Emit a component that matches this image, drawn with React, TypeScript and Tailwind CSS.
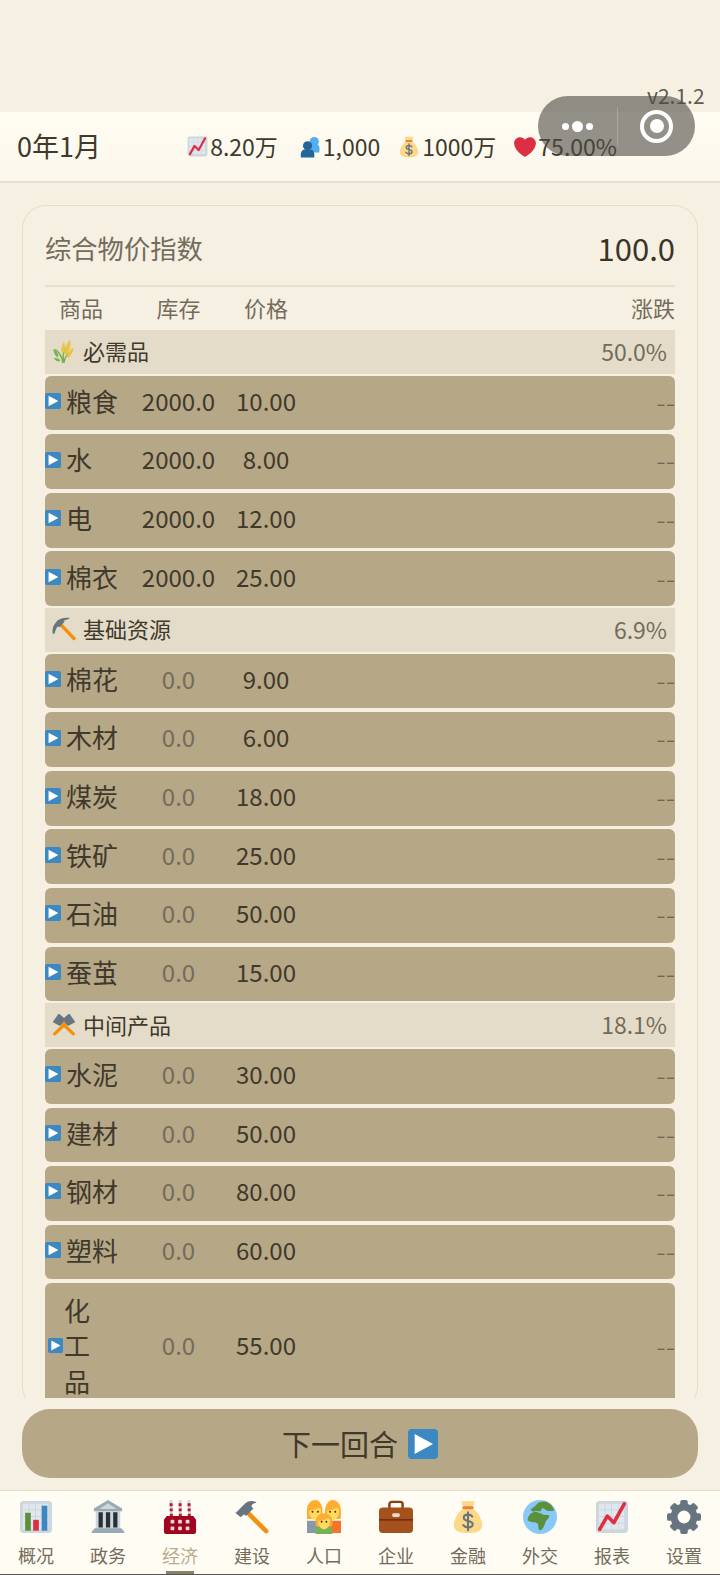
import React from "react";

type IP = { className?: string };
const S = ({ className, children }: IP & { children: React.ReactNode }) => (
  <svg viewBox="0 0 36 36" className={className}>{children}</svg>
);

const Play = ({ className }: IP) => (
  <S className={className}>
    <path fill="#3B88C3" d="M36 32c0 2.2-1.8 4-4 4H4c-2.2 0-4-1.800-4-4V4c0-2.2 1.800-4 4-4h28c2.200 0 4 1.800 4 4z" />
    <path fill="#FFF" d="M8 6l22 12L8 30z" />
  </S>
);
const Heart = ({ className }: IP) => (
  <S className={className}>
    <path fill="#DD2E44" d="M35.9 11.8c0-5.4-4.4-9.800-9.900-9.800-3.300 0-6.200 1.600-8 4.100C16.200 3.600 13.300 2 10 2 4.600 2 .1 6.400.1 11.800c0 .8.100 1.500.3 2.300C1.800 22.600 11.200 31.600 18 34c6.800-2.400 16.200-11.400 17.600-19.900.2-.8.300-1.500.3-2.300z" />
  </S>
);
const ChartBg = () => (
  <>
    <rect x="1" y="1" width="34" height="34" rx="4" fill="#CCD6DD" />
    {[4, 11, 18, 25].map((x) =>
      [4, 11, 18, 25].map((y) => <rect key={`${x}-${y}`} x={x} y={y} width="6" height="6" fill="#E1E8ED" />)
    )}
  </>
);
const ChartUp = ({ className }: IP) => (
  <S className={className}>
    <ChartBg />
    <path d="M5 31l8-14 7 7L31 4" fill="none" stroke="#DD2E44" strokeWidth="3.800" strokeLinecap="round" strokeLinejoin="round" />
  </S>
);
const Bars = ({ className }: IP) => (
  <S className={className}>
    <ChartBg />
    <rect x="6.500" y="13.500" width="6" height="19" fill="#5C913B" />
    <rect x="15" y="21" width="6" height="11.500" fill="#DD2E44" />
    <rect x="24" y="6" width="6" height="26.500" fill="#3B88C3" />
  </S>
);
const Busts = ({ className }: IP) => (
  <S className={className}>
    <circle cx="25" cy="9" r="7.500" fill="#55ACEE" />
    <path fill="#55ACEE" d="M20 14h11c3 3 3 8 2 13H18z" />
    <circle cx="14" cy="16" r="7.500" fill="#269" />
    <path fill="#269" d="M3 35v-5c0-4 2-7 5-8h12c3 1 5 4 5 8v5z" />
  </S>
);
const Money = ({ className }: IP) => (
  <S className={className}>
    <path fill="#FDD888" d="M13 9C7 13 3 21 3 27c0 6 7 8 15 8s15-2 15-8c0-6-4-14-10-18z" />
    <path fill="#FDD888" d="M11 1c2 1 4 0 7 0s5 1 7 0c0 3-2 6-3 8H14c-1-2-3-5-3-8z" />
    <rect x="12" y="6.500" width="12" height="3.200" rx="1.500" fill="#E8853A" />
    <path d="M22.500 17.500c-1-1.500-2.600-2-4.500-2-2.400 0-4.500 1.200-4.500 3.400 0 4.600 9.500 2.200 9.500 6.800 0 2.200-2.300 3.300-5 3.300-2 0-3.800-.7-5-2.300M18 13v19" fill="none" stroke="#67757F" strokeWidth="2.200" strokeLinecap="round" />
  </S>
);
const Sheaf = ({ className }: IP) => (
  <S className={className}>
    <path d="M16 35C15 27 12 21 5 16M17 35c-1-8 0-15 2-22M18 35c1-7 4-12 10-17" fill="none" stroke="#77B255" strokeWidth="2.200" strokeLinecap="round" />
    <path d="M15 21c-2-5-1-12 3-17 2 5 2 12-1 17zM19 23c-1-6 1-14 8-22 2 6 0 15-5 22zM22 27c0-5 4-11 10-14 0 6-3 12-8 15z" fill="#E8C547" />
    <path d="M7 27c-3-3-5-8-5-12 4 2 7 6 8 11zM11 34c-3 0-7-2-8-5 3-1 8 0 9 3z" fill="#77B255" />
  </S>
);
const Pick = ({ className }: IP) => (
  <S className={className}>
    <path d="M11 10l22 23" stroke="#F4900C" strokeWidth="5" strokeLinecap="round" />
    <path fill="#66757F" d="M1 25C-1 12 10 0 25 2c1.500.2 1.500 1.500 0 1.800-5 1-9 3.200-12 6.200l-3 3c-3 3-5 7-6 12-.5 1.500-2.800 1.500-3 0z" />
    <path fill="#66757F" d="M8 6l6-2 5 4-8 8-5-3z" />
  </S>
);
const HammerPick = ({ className }: IP) => (
  <S className={className}>
    <path d="M25 12L4 32M11 12l21 20" stroke="#F4900C" strokeWidth="5" strokeLinecap="round" />
    <path fill="#66757F" d="M2 13L9 3c1-1 2-1 3 0l7 6c1 1 1 2 0 3l-6 7c-1 1-2 1-3 0l-8-4c-1-1-1-1 0-2z" />
    <path fill="#66757F" d="M34 13L27 3c-1-1-2-1-3 0l-7 6c-1 1-1 2 0 3l6 7c1 1 2 1 3 0l8-4c1-1 1-1 0-2z" />
  </S>
);
const Bank = ({ className }: IP) => (
  <S className={className}>
    <path fill="#CCD6DD" d="M5 12h26v19H5z" />
    <path fill="#99AAB5" d="M18 0L3 9v2c0 .6.400 1 1 1h28c.600 0 1-.400 1-1V9z" />
    <path fill="#CCD6DD" d="M18 3.500L9 9.500h18z" />
    <path fill="#292F33" d="M8 13h4.500v16H8zM15.800 13h4.500v16h-4.500zM23.500 13H28v16h-4.500z" />
    <path fill="#99AAB5" d="M4 30h28l3 3c.500 1 0 2-1 2H2c-1 0-1.500-1-1-2z" />
  </S>
);
const Factory = ({ className }: IP) => (
  <S className={className}>
    {[7, 16.500, 26].map((x) => (
      <g key={x} transform={`translate(${x} 0)`}>
        <path fill="#CCD6DD" d="M.6 0h1.800c.4 0 .6.300.6.600L3.500 18h-3L0 .6C0 .3.300 0 .6 0z" />
        <path fill="#BE1931" d="M0 3.500h3.200v3H0zM.1 9h3.200v3H.1zM.2 14.500h3.200v3H.2z" />
      </g>
    ))}
    <path fill="#A0041E" d="M1 21l3-4h28l3 4v13c0 1-1 2-2 2H3c-1 0-2-1-2-2z" />
    {[8, 16, 24].map((x) =>
      [21, 28].map((y) => <rect key={`${x}-${y}`} x={x} y={y} width="4" height="4" rx="1" fill="#EBD9D6" />)
    )}
  </S>
);
const Hammer = ({ className }: IP) => (
  <S className={className}>
    <path d="M15 15l18 18" stroke="#F4900C" strokeWidth="4.800" strokeLinecap="round" />
    <path fill="#66757F" d="M1 13.500L11 3.500c3-2.500 7-3 11-1.500 1 .5.500 1.200-.5 1.200-2.500.300-4 1.800-4 3.800l2 2-8 8-2-2-2.500 2.500c-.7.700-1.300.700-2 0l-4-3.500c-.7-.7-.7-.8 0-1.500z" />
  </S>
);
const Family = ({ className }: IP) => (
  <S className={className}>
    <path fill="#8899A6" d="M0 35V22h15v13z" />
    <path fill="#F4742B" d="M36 35V22H21v13z" />
    <path fill="#FFAC33" d="M0 20c-.5-3-.5-5-.5-8C-.5 5 4 0 8.500 0s8 5 8 12c0 4 0 6-1 8z" />
    <path fill="#FFAC33" d="M20 20c-1-2-1-4-1-8 0-7 4-12 8-12 5 0 9 5 9 12 0 3 0 5-.5 8z" />
    <path fill="#FFDC5D" d="M2 11c3 0 8-1 11-3 1 1 2 2 2 3 0 6-3 10-6.500 10S2 17 2 11zM21 11c3 0 8-1 11-3 1 1 2 2 2 3 0 6-3 10-6.500 10S21 17 21 11z" />
    <path fill="#77B255" d="M9 36v-3c0-3 2-5 4-5h10c2 0 4 2 4 5v3z" />
    <path fill="#FFAC33" d="M10 28c-1-2-1-3-1-5 0-5 4-9 9-9s9 4 9 9c0 2 0 3-1 5z" />
    <path fill="#FFDC5D" d="M11.500 22c3 0 8-1 11-3 1 1 2 2 2 3 0 5-3 9-6.500 9s-6.500-4-6.500-9z" />
    <circle cx="5.800" cy="12.500" r="1" fill="#662113" />
    <circle cx="11.500" cy="12.500" r="1" fill="#662113" />
    <circle cx="24.500" cy="12.500" r="1" fill="#662113" />
    <circle cx="30" cy="12.500" r="1" fill="#662113" />
    <circle cx="15.500" cy="23" r="1" fill="#662113" />
    <circle cx="20.500" cy="23" r="1" fill="#662113" />
  </S>
);
const Briefcase = ({ className }: IP) => (
  <S className={className}>
    <path fill="none" stroke="#8A3F15" strokeWidth="2.600" d="M11 10V4.500C11 3 12 2 13.500 2h9C24 2 25 3 25 4.500V10" />
    <rect x="0" y="8" width="36" height="27" rx="4" fill="#A5511E" />
    <path d="M0 21h36" stroke="#662113" strokeWidth="1.400" />
    <rect x="14" y="14" width="8" height="4" rx="1.500" fill="#E8DCC8" />
  </S>
);
const Globe = ({ className }: IP) => (
  <S className={className}>
    <circle cx="18" cy="18" r="18" fill="#88C9F9" />
    <path fill="#5C913B" d="M8 10c2-2 5-3 7-6 3-2.500 7-3 10-2 4 1.500 7 5 8 9-2 1-5 1-8 0-2-1-3-3-5-2-1 1 0 3-2 3s-3-1-5 0-3 0-5-2z" />
    <path fill="#5C913B" d="M5 21c0-4 3-7 6-8 3-1 5 0 7 1 2 0 3 2 5 2 2 0 5 0 5 1-1 3-3 4-4 6-1 3-2 6-4 8-1 1.500-3 1.500-3.500-.5-.5-3 0-5-1.500-6s-3-1-5-1c-2-.5-5-1-5-2.500z" />
  </S>
);
const Gear = ({ className }: IP) => (
  <S className={className}>
    <circle cx="18" cy="18" r="10.500" fill="none" stroke="#66757F" strokeWidth="7.400" />
    {[0, 45, 90, 135, 180, 225, 270, 315].map((a) => (
      <rect key={a} x="14" y="0" width="8" height="8" rx="2" fill="#66757F" transform={`rotate(${a} 18 18)`} />
    ))}
  </S>
);

const Dash = () => (
  <div className="flex-1 text-right text-[28px] font-light leading-[36.4px] text-[#6f6857]">--</div>
);
const Row = ({ name, stock, price }: { name: string; stock: string; price: string }) => {
  const empty = stock === "0.0";
  return (
    <div className="my-[1.92px] flex items-center rounded-[6px] bg-[#b6a786] pb-[11.2px] pt-[7.2px] text-[#40392c]">
      <div className="flex w-[85px] items-center">
        <Play className="h-[16px] w-[16px] shrink-0" />
        <span className="ml-[5px] text-[26px] leading-[36.4px]">{name}</span>
      </div>
      <div className={`w-[97px] text-center text-[24px] leading-[36.4px] ${empty ? "text-[#736c5b]" : ""}`}>{stock}</div>
      <div className="w-[78px] text-center text-[24px] leading-[36.4px]">{price}</div>
      <Dash />
    </div>
  );
};
const TallRow = ({ stock, price }: { stock: string; price: string }) => (
  <div className="my-[1.92px] flex items-center rounded-t-[6px] bg-[#b6a786] py-[8.5px] text-[#40392c]">
    <div className="flex w-[85px] items-center pl-[3px]">
      <Play className="h-[15px] w-[15px] shrink-0" />
      <span className="ml-[1px] w-[26px] text-[26px] leading-[35.5px]">化工品</span>
    </div>
    <div className="w-[97px] text-center text-[24px] leading-[36.4px] text-[#736c5b]">{stock}</div>
    <div className="w-[78px] text-center text-[24px] leading-[36.4px]">{price}</div>
    <Dash />
  </div>
);
const Cat = ({ icon, name, pct }: { icon: React.ReactNode; name: string; pct: string }) => (
  <div className="flex h-[43.7px] items-center bg-[#e4dcc9] pb-[2px] pl-[7px] pr-[8px]">
    <span className="flex w-[24px] justify-center">{icon}</span>
    <span className="ml-[7px] text-[22px] text-[#40392c]">{name}</span>
    <span className="ml-auto text-[23px] text-[#736c5b]">{pct}</span>
  </div>
);
const Stat = ({ icon, text, className }: { icon: React.ReactNode; text: string; className?: string }) => (
  <div className={`flex items-center gap-[2px] ${className ?? ""}`}>
    {icon}
    <span className="text-[23px] text-[#40392c]">{text}</span>
  </div>
);

const tabs: [string, (p: IP) => React.ReactElement][] = [
  ["概况", Bars],
  ["政务", Bank],
  ["经济", Factory],
  ["建设", Hammer],
  ["人口", Family],
  ["企业", Briefcase],
  ["金融", Money],
  ["外交", Globe],
  ["报表", ChartUp],
  ["设置", Gear],
];

export default function App() {
  return (
    <div
      className="relative flex h-[1575px] w-[720px] flex-col overflow-hidden bg-[#f6f0e3]"
      style={{ fontFamily: '"Noto Sans CJK SC", "Noto Sans", sans-serif' }}
    >
      <div className="h-[112px] shrink-0" />
      <header className="flex h-[71px] shrink-0 items-center border-b-2 border-[#e8dfce] bg-gradient-to-b from-[#fffcf2] to-[#fbf7ec] pl-[17px] pr-[103px]">
        <span className="text-[27px] text-[#40392c]">0年1月</span>
        <div className="ml-auto flex items-center gap-[18px]">
          <Stat className="mr-[3px]" icon={<ChartUp className="h-[21px] w-[21px]" />} text="8.20万" />
          <Stat icon={<Busts className="h-[22px] w-[22px]" />} text="1,000" />
          <Stat icon={<Money className="h-[22px] w-[22px]" />} text="1000万" />
          <Stat icon={<Heart className="h-[22px] w-[22px]" />} text="75.00%" />
        </div>
      </header>

      <main className="min-h-0 flex-1 overflow-hidden px-[22px] pt-[22px]">
        <div className="flex flex-col rounded-[24px] border border-[#e6dcc9] px-[22px]">
          <div className="flex h-[81px] items-center justify-between border-b-2 border-[#e8dfce] pt-[5px]">
            <span className="text-[26.3px] text-[#736c5b]">综合物价指数</span>
            <span className="text-[31px] text-[#3a3428]">100.0</span>
          </div>
          <div className="flex h-[43px] items-center pb-[2px] text-[22px] text-[#736c5b]">
            <span className="w-[85px] pl-[14px]">商品</span>
            <span className="w-[97px] text-center">库存</span>
            <span className="w-[78px] text-center">价格</span>
            <span className="flex-1 text-right">涨跌</span>
          </div>
          <Cat icon={<Sheaf className="h-[26px] w-[26px]" />} name="必需品" pct="50.0%" />
          <Row name="粮食" stock="2000.0" price="10.00" />
          <Row name="水" stock="2000.0" price="8.00" />
          <Row name="电" stock="2000.0" price="12.00" />
          <Row name="棉衣" stock="2000.0" price="25.00" />
          <Cat icon={<Pick className="h-[25px] w-[25px]" />} name="基础资源" pct="6.9%" />
          <Row name="棉花" stock="0.0" price="9.00" />
          <Row name="木材" stock="0.0" price="6.00" />
          <Row name="煤炭" stock="0.0" price="18.00" />
          <Row name="铁矿" stock="0.0" price="25.00" />
          <Row name="石油" stock="0.0" price="50.00" />
          <Row name="蚕茧" stock="0.0" price="15.00" />
          <Cat icon={<HammerPick className="h-[25px] w-[25px]" />} name="中间产品" pct="18.1%" />
          <Row name="水泥" stock="0.0" price="30.00" />
          <Row name="建材" stock="0.0" price="50.00" />
          <Row name="钢材" stock="0.0" price="80.00" />
          <Row name="塑料" stock="0.0" price="60.00" />
          <TallRow stock="0.0" price="55.00" />
        </div>
      </main>

      <div className="shrink-0 px-[22px] pb-[12px] pt-[11px]">
        <button className="flex h-[69px] w-full items-center justify-center gap-[10px] rounded-[28px] bg-[#b6a786] text-[29px] text-[#40392c]">
          下一回合
          <Play className="h-[30px] w-[30px]" />
        </button>
      </div>

      <nav className="relative flex h-[85px] shrink-0 border-b border-t border-b-[#555] border-t-[#e6dcc9] bg-[#fffcf3]">
        {tabs.map(([label, Icon], i) => (
          <div key={label} className="flex w-[72px] flex-col items-center pt-[9px]">
            <Icon className="h-[34px] w-[34px]" />
            <span className={`mt-[8px] text-[18px] leading-[26px] ${i === 2 ? "text-[#b9ab8e]" : "text-[#736c5b]"}`}>{label}</span>
          </div>
        ))}
        <div className="absolute bottom-0 left-[166px] h-[3px] w-[28px] bg-[#8c7f68]" />
      </nav>

      <span className="absolute left-[647px] top-[80px] text-[21px] text-[#5f5b50]">v2.1.2</span>
      <div className="absolute left-[538px] top-[96px] flex h-[60px] w-[157px] items-center rounded-[30px] bg-[#4b4a42]/60">
        <div className="flex w-[79px] items-center justify-center gap-[3px]">
          <span className="h-[7px] w-[7px] rounded-full bg-white" />
          <span className="h-[11px] w-[11px] rounded-full bg-white" />
          <span className="h-[7px] w-[7px] rounded-full bg-white" />
        </div>
        <div className="h-[39px] w-px bg-white/20" />
        <div className="flex flex-1 items-center justify-center">
          <div className="flex h-[33px] w-[33px] items-center justify-center rounded-full border-[4px] border-white">
            <span className="h-[14px] w-[14px] rounded-full bg-white" />
          </div>
        </div>
      </div>
    </div>
  );
}
